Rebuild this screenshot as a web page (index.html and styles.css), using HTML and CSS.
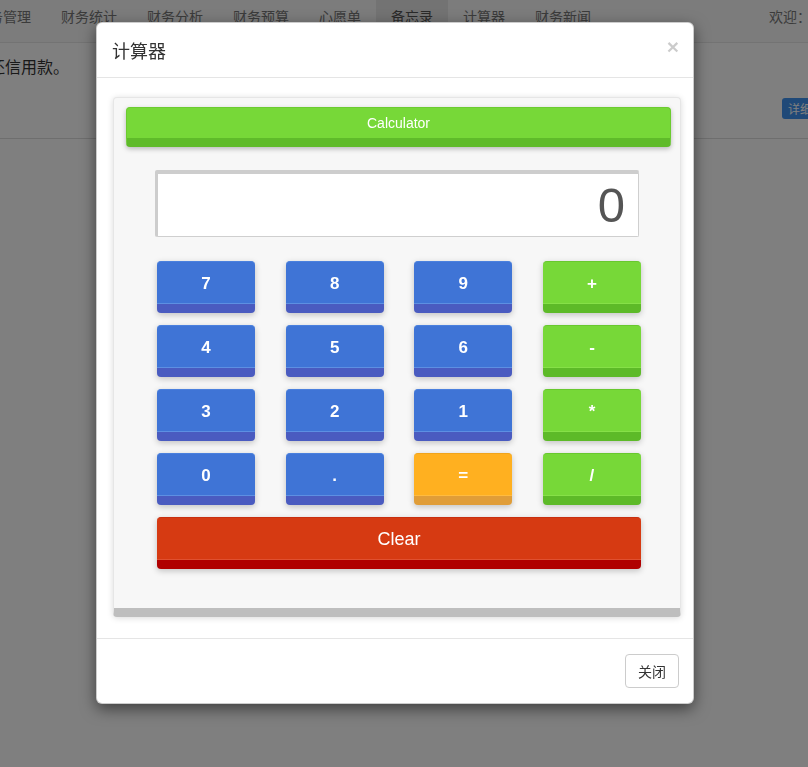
FILE: index.html
```html
<!DOCTYPE html>
<html lang="zh-CN">
<head>
<meta charset="utf-8">
<title>计算器</title>
<link rel="stylesheet" href="styles.css">
</head>
<body>
<div class="page">
  <nav class="navbar">
    <ul class="nav">
      <li>财务管理</li>
      <li>财务统计</li>
      <li>财务分析</li>
      <li>财务预算</li>
      <li>心愿单</li>
      <li class="active">备忘录</li>
      <li>计算器</li>
      <li>财务新闻</li>
    </ul>
    <div class="welcome">欢迎：</div>
  </nav>
  <div class="content">
    <div class="memo">
      <p class="memo-text">还信用款。</p>
      <div class="memo-meta"><span class="label">详细</span></div>
    </div>
  </div>
</div>
<div class="backdrop"></div>
<div class="modal">
  <div class="modal-header">
    <h4 class="modal-title">计算器</h4>
    <span class="close">×</span>
  </div>
  <div class="modal-body">
    <div class="calc">
      <div class="calc-title">Calculator</div>
      <div class="display">0</div>
      <div class="keys">
        <button class="key blue">7</button>
        <button class="key blue">8</button>
        <button class="key blue">9</button>
        <button class="key green">+</button>
        <button class="key blue">4</button>
        <button class="key blue">5</button>
        <button class="key blue">6</button>
        <button class="key green">-</button>
        <button class="key blue">3</button>
        <button class="key blue">2</button>
        <button class="key blue">1</button>
        <button class="key green">*</button>
        <button class="key blue">0</button>
        <button class="key blue">.</button>
        <button class="key orange">=</button>
        <button class="key green">/</button>
        <button class="key red clear">Clear</button>
      </div>
    </div>
  </div>
  <div class="modal-footer">
    <button class="btn-close">关闭</button>
  </div>
</div>
</body>
</html>
```
FILE: styles.css
```css
* { box-sizing: border-box; }
html, body { margin: 0; padding: 0; }
body {
  width: 808px;
  height: 767px;
  overflow: hidden;
  background: #fff;
  font-family: "Liberation Sans", "Noto Sans CJK SC", sans-serif;
  font-size: 14px;
  color: #333;
  position: relative;
}

.navbar {
  height: 43px;
  background: #f8f8f8;
  border-bottom: 1px solid #e7e7e7;
  display: flex;
  justify-content: space-between;
  overflow: hidden;
}
.nav {
  list-style: none;
  margin: 0 0 0 -40px;
  padding: 0;
  display: flex;
}
.nav li {
  padding: 0 15px;
  line-height: 33px;
  height: 42px;
  color: #777;
  font-family: "Noto Sans CJK SC", sans-serif;
  font-size: 14px;
}
.nav li.active { background: #e7e7e7; color: #555; }
.welcome {
  line-height: 33px;
  color: #777;
  margin-right: -3px;
  font-family: "Noto Sans CJK SC", sans-serif;
  white-space: nowrap;
}

.memo {
  border-bottom: 1px solid #ddd;
  height: 96px;
  display: flex;
  flex-direction: column;
}
.memo-text {
  margin: 11px 0 0 -11px;
  font-size: 16px;
  line-height: 24px;
  color: #333;
  font-family: "Noto Sans CJK SC", sans-serif;
}
.memo-meta {
  margin-top: 20px;
  display: flex;
  justify-content: flex-end;
  margin-right: -10px;
}
.label {
  display: inline-block;
  background: #3e93f0;
  color: #fff;
  font-size: 12px;
  line-height: 21px;
  padding: 0 6px;
  border-radius: 3px;
  font-family: "Noto Sans CJK SC", sans-serif;
}

.backdrop {
  position: fixed;
  inset: 0;
  background: rgba(0,0,0,0.5);
}

.modal {
  position: absolute;
  left: 96px;
  top: 22px;
  width: 598px;
  background: #fff;
  border: 1px solid rgba(0,0,0,0.2);
  border-radius: 6px;
  box-shadow: 0 5px 15px rgba(0,0,0,0.5);
}
.modal-header {
  padding: 15px 15px 14px;
  border-bottom: 1px solid #e5e5e5;
  display: flex;
  justify-content: space-between;
  align-items: center;
}
.modal-title {
  margin: 0;
  font-size: 18px;
  line-height: 25px;
  font-weight: normal;
  color: #333;
  font-family: "Noto Sans CJK SC", sans-serif;
}
.close {
  font-size: 21px;
  font-weight: bold;
  line-height: 1;
  color: #000;
  opacity: 0.2;
  margin-right: -1px;
  margin-top: -9px;
}

.modal-body {
  padding: 19px 0 21px 16px;
}
.calc {
  width: 568px;
  background: #f7f7f7;
  border: 1px solid #e6e6e6;
  border-bottom: 9px solid #bebebe;
  border-radius: 4px;
  box-shadow: 0 1px 6px rgba(0,0,0,0.15);
  padding: 9px 9px 39px 12px;
}
.calc-title {
  height: 40px;
  background: #77d838;
  border: 1px solid #6ccb30;
  border-bottom: 9px solid #5fbb2a;
  border-radius: 4px;
  color: #fff;
  font-size: 14px;
  line-height: 30px;
  text-align: center;
  box-shadow: 0 2px 5px rgba(0,0,0,0.25);
}
.display {
  margin: 23px 0 0 29px;
  width: 484px;
  height: 67px;
  background: #fff;
  border: 1px solid #cfcfcf;
  border-top: 4px solid #cdcdcd;
  border-left: 3px solid #cdcdcd;
  border-radius: 2px;
  font-size: 49px;
  line-height: 62px;
  text-align: right;
  padding-right: 13px;
  color: #555;
}
.keys {
  margin: 24px 0 0 31px;
  width: 484px;
  display: grid;
  grid-template-columns: repeat(4, 98px);
  justify-content: space-between;
  row-gap: 12px;
}
.key {
  height: 52px;
  border: none;
  border-radius: 4px;
  color: #fff;
  font-family: "Liberation Sans", sans-serif;
  font-size: 17px;
  font-weight: bold;
  padding: 0 0 9px;
  line-height: 43px;
}
.key.blue {
  background: #3f74d6;
  border-top: 1px solid #4a80de;
  border-bottom: 9px solid #4a5bc0;
  box-shadow: inset 0 -1px 0 #5d8fe2, 0 2px 6px rgba(0,0,0,0.22);
}
.key.green {
  background: #77d838;
  border-top: 1px solid #68c82e;
  border-bottom: 9px solid #5dba28;
  box-shadow: inset 0 -1px 0 #86e048, 0 2px 6px rgba(0,0,0,0.22);
}
.key.orange {
  background: #ffb020;
  border-top: 1px solid #f0a41c;
  border-bottom: 9px solid #e09d38;
  box-shadow: inset 0 -1px 0 #ffbb40, 0 2px 6px rgba(0,0,0,0.22);
}
.key.red {
  background: #d63a12;
  border-top: 1px solid #c83010;
  border-bottom: 9px solid #b00000;
  box-shadow: inset 0 -1px 0 #e05030, 0 2px 6px rgba(0,0,0,0.22);
}
.key.clear {
  grid-column: 1 / -1;
  font-size: 18px;
  font-weight: normal;
}

.modal-footer {
  border-top: 1px solid #e5e5e5;
  padding: 15px 14px 15px 15px;
  display: flex;
  justify-content: flex-end;
}
.btn-close {
  height: 34px;
  padding: 0 12px;
  background: #fff;
  border: 1px solid #ccc;
  border-radius: 4px;
  color: #333;
  font-size: 14px;
  font-family: "Noto Sans CJK SC", sans-serif;
  line-height: 32px;
}
```
